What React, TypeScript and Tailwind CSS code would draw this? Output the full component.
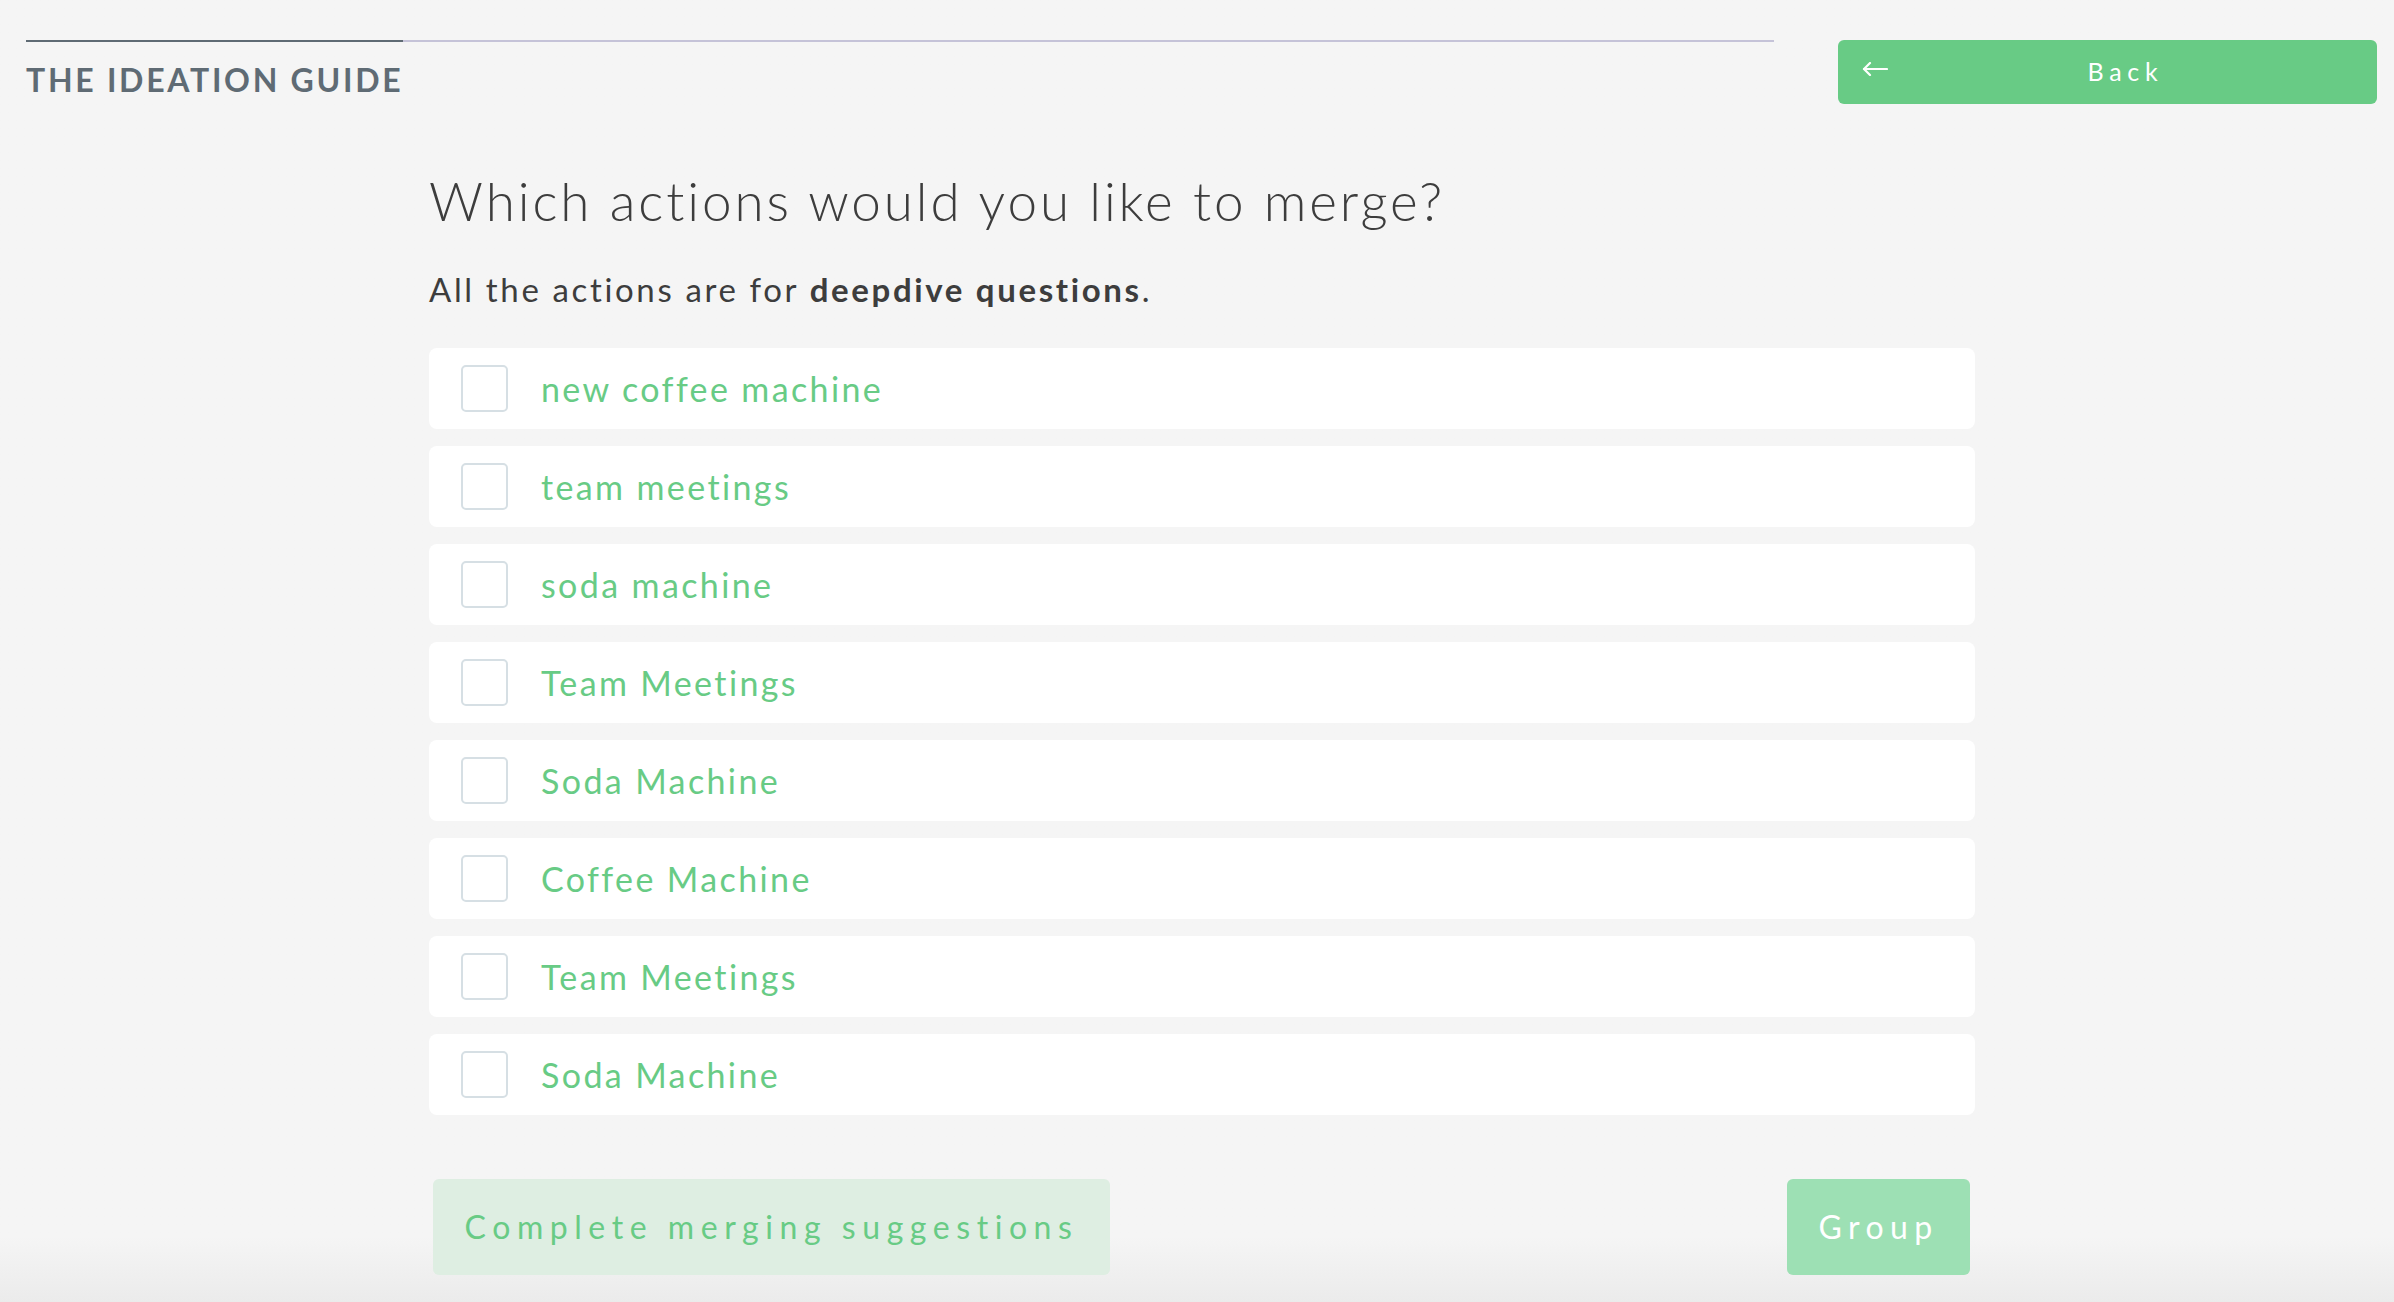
import React from "react"

const actions = [
  "new coffee machine",
  "team meetings",
  "soda machine",
  "Team Meetings",
  "Soda Machine",
  "Coffee Machine",
  "Team Meetings",
  "Soda Machine",
]

export default function App() {
  return (
    <div
      className="min-h-screen bg-linear-to-b from-[#f5f5f5] from-95% to-[#ebebeb] text-[#3d3d3d]"
      style={{ fontFamily: "Lato, 'Open Sans', sans-serif" }}
    >
      {/* Header */}
      <div className="flex items-start gap-[64px] pl-[26px] pr-[17px] pt-[40px]">
        <div className="flex-1">
          <div className="h-[2px] bg-[#c5c3d8]">
            <div className="h-[2px] w-[377px] bg-[#5f6b74]" />
          </div>
          <h1 className="mt-[22px] text-[32px] leading-[32px] font-bold tracking-[0.085em] text-[#5f6b74]">
            THE IDEATION GUIDE
          </h1>
        </div>
        <button className="flex h-[64px] w-[539px] items-center rounded-[6px] bg-[#68cb85] pl-[24px] pr-[14px] text-white">
          <BackArrow />
          <span className="flex-1 text-center text-[25px] tracking-[0.23em]">Back</span>
        </button>
      </div>

      {/* Content */}
      <div className="ml-[429px] w-[1546px]">
        <h2 className="mt-[70px] text-[53px] leading-none font-light tracking-[0.055em]">
          Which actions would you like to merge?
        </h2>
        <p className="mt-[46px] text-[33px] leading-none tracking-[0.08em]">
          All the actions are for <span className="font-bold">deepdive questions</span>.
        </p>

        <div className="mt-[42px] flex flex-col gap-[17px]">
          {actions.map((label, i) => (
            <label
              key={i}
              className="flex h-[81px] items-center gap-[33px] rounded-[8px] bg-white pl-[32px]"
            >
              <span className="h-[47px] w-[47px] rounded-[5px] border-2 border-[#d6dfe4] bg-white" />
              <span className="text-[34px] tracking-[0.07em] text-[#68cb85]">{label}</span>
            </label>
          ))}
        </div>

        <div className="mt-[64px] flex justify-between pl-[4px] pr-[5px]">
          <button className="h-[96px] w-[677px] rounded-[6px] bg-[#deeee2] text-[32px] tracking-[0.205em] text-[#68cb85]">
            Complete merging suggestions
          </button>
          <button className="h-[96px] w-[183px] rounded-[6px] bg-[#9de0b4] text-[32px] tracking-[0.2em] text-white">
            Group
          </button>
        </div>
      </div>
    </div>
  )
}

function BackArrow() {
  return (
    <svg
      className="mb-[6px]"
      width="26"
      height="14"
      viewBox="0 0 26 14"
      fill="none"
      stroke="white"
      strokeWidth="2.2"
      strokeLinecap="round"
      strokeLinejoin="round"
    >
      <path d="M2 7H25" />
      <path d="M8 1L2 7L8 13" />
    </svg>
  )
}
